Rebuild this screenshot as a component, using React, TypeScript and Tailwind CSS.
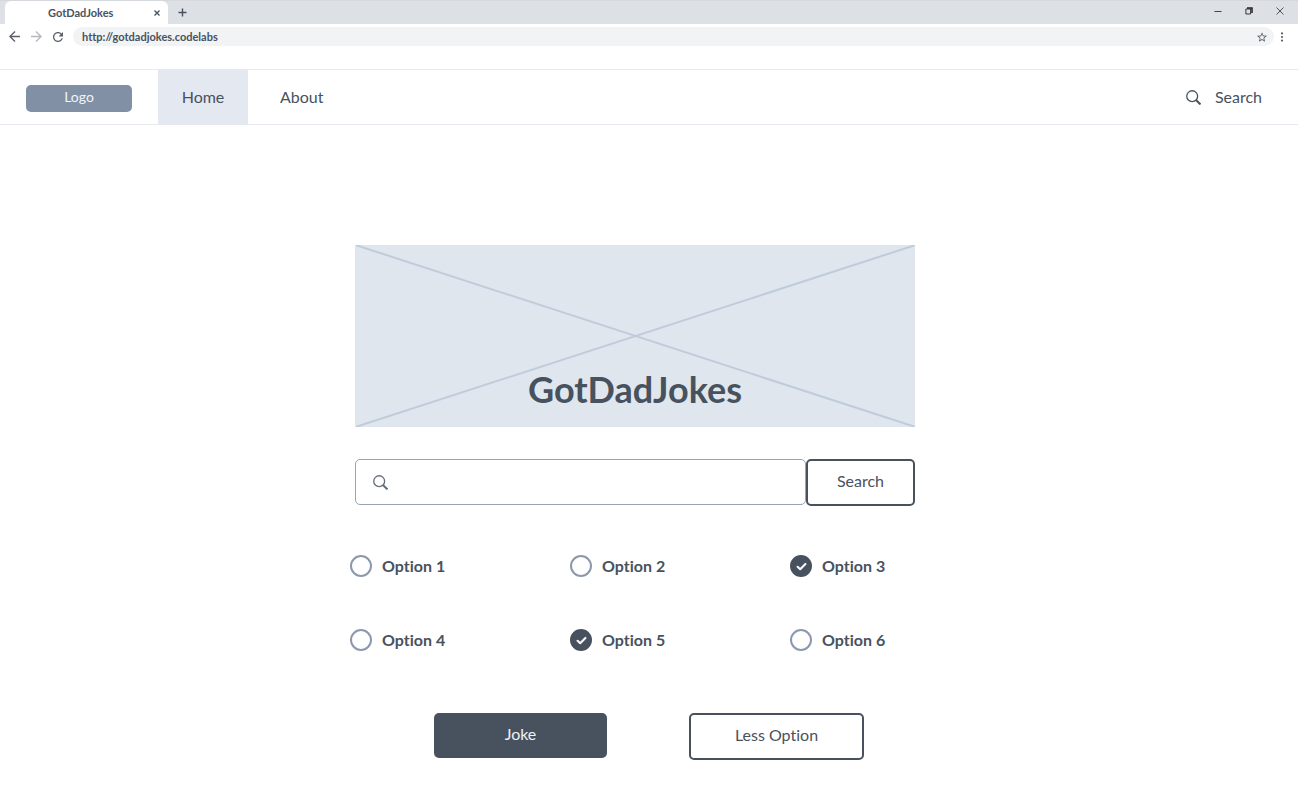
import { useState } from "react";

const initialOptions = [
  { label: "Option 1", checked: false },
  { label: "Option 2", checked: false },
  { label: "Option 3", checked: true },
  { label: "Option 4", checked: false },
  { label: "Option 5", checked: true },
  { label: "Option 6", checked: false },
];

function SearchIcon({ className }: { className: string }) {
  return (
    <svg viewBox="0 0 16 16" fill="none" stroke="currentColor" className={className} aria-hidden="true">
      <circle cx="6.6" cy="6.6" r="5.8" strokeWidth="1.4" />
      <path d="M10.6 10.6 L15.4 15.4" strokeWidth="2.1" />
    </svg>
  );
}

function TabStrip() {
  return (
    <div className="flex h-6 items-stretch border-t border-[#d5d8dc] bg-[#dde0e4] pl-[5px] text-[#48525e]">
      <div className="flex w-[163px] items-center rounded-t-md bg-white pr-2 pl-[43px]">
        <span className="flex-1 text-[11px] leading-4 font-bold">GotDadJokes</span>
        <button type="button" aria-label="Close tab" className="flex">
          <svg viewBox="0 0 6 6" className="size-[6px]" stroke="currentColor" strokeWidth="1.3">
            <path d="M0.5 0.5 L5.5 5.5 M5.5 0.5 L0.5 5.5" />
          </svg>
        </button>
      </div>
      <button type="button" aria-label="New tab" className="ml-[10px] flex items-center">
        <svg viewBox="0 0 9 9" className="size-[9px]" stroke="currentColor" strokeWidth="1.4">
          <path d="M4.5 0.5 V8.5 M0.5 4.5 H8.5" />
        </svg>
      </button>
      <div className="mb-1 ml-auto flex items-center gap-[23px] pr-[14px]">
        <button type="button" aria-label="Minimize" className="flex">
          <svg viewBox="0 0 8 8" className="size-2" stroke="#444" strokeWidth="1">
            <path d="M0.5 4.5 H7.5" />
          </svg>
        </button>
        <button type="button" aria-label="Restore" className="flex">
          <svg viewBox="0 0 8 8" className="size-2" fill="none" stroke="#222">
            <path d="M2 1 H7 V6" strokeWidth="1.5" />
            <path d="M0.9 2 H5.6 V7 H0.9 Z" strokeWidth="0.9" />
          </svg>
        </button>
        <button type="button" aria-label="Close window" className="flex">
          <svg viewBox="0 0 8 8" className="size-2" stroke="#444" strokeWidth="0.9">
            <path d="M0.5 0.5 L7.5 7.5 M7.5 0.5 L0.5 7.5" />
          </svg>
        </button>
      </div>
    </div>
  );
}

function AddressBar() {
  return (
    <div className="flex items-center pt-[3px] pr-[14px] pl-[9px] text-[#5b6066]">
      <button type="button" aria-label="Back" className="flex">
        <svg viewBox="4 4 16 16" className="size-[11px]" fill="currentColor">
          <path d="M20 11H7.83l5.59-5.59L12 4l-8 8 8 8 1.41-1.41L7.83 13H20v-2z" />
        </svg>
      </button>
      <button type="button" aria-label="Forward" className="ml-[11px] flex text-[#b5b9be]">
        <svg viewBox="4 4 16 16" className="size-[11px]" fill="currentColor">
          <path d="M12 4l-1.41 1.41L16.17 11H4v2h12.17l-5.58 5.59L12 20l8-8z" />
        </svg>
      </button>
      <button type="button" aria-label="Reload" className="ml-[11px] flex">
        <svg viewBox="4 4 16 16" className="size-[10px]" fill="currentColor">
          <path d="M17.65 6.35C16.2 4.9 14.21 4 12 4c-4.42 0-7.99 3.58-7.99 8s3.57 8 7.99 8c3.73 0 6.84-2.55 7.73-6h-2.08c-.82 2.33-3.04 4-5.65 4-3.31 0-6-2.69-6-6s2.69-6 6-6c1.66 0 3.14.69 4.22 1.78L13 11h7V4l-2.35 2.35z" />
        </svg>
      </button>
      <div className="ml-[10px] flex h-[19px] flex-1 items-center rounded-full bg-[#f1f3f5] pr-[7px] pl-[9px]">
        <input
          type="text"
          aria-label="Address"
          defaultValue="http://gotdadjokes.codelabs"
          className="min-w-0 flex-1 bg-transparent text-[11px] leading-4 font-bold text-[#48525e] outline-none"
        />
        <button type="button" aria-label="Bookmark" className="flex">
          <svg viewBox="2 2 20 19" className="size-[10px]" fill="currentColor">
            <path d="M22 9.24l-7.19-.62L12 2 9.19 8.63 2 9.24l5.46 4.73L5.82 21 12 17.27 18.18 21l-1.63-7.03L22 9.24zM12 15.4l-3.76 2.27 1-4.28-3.32-2.88 4.38-.38L12 6.1l1.71 4.04 4.38.38-3.32 2.88 1 4.28L12 15.4z" />
          </svg>
        </button>
      </div>
      <button type="button" aria-label="Menu" className="ml-[6px] flex">
        <svg viewBox="0 0 4 10" className="h-[10px] w-1" fill="currentColor">
          <circle cx="2" cy="1.4" r="1.1" />
          <circle cx="2" cy="5" r="1.1" />
          <circle cx="2" cy="8.6" r="1.1" />
        </svg>
      </button>
    </div>
  );
}

function NavBar() {
  return (
    <nav className="mt-[23px] flex h-14 items-stretch border-y border-[#e6e9ee] leading-6">
      <a
        href="#logo"
        className="mb-3 ml-[26px] h-[27px] w-[106px] self-end rounded-[5px] bg-[#8290a6] text-center text-[14px] text-[#f1f4f8]"
      >
        Logo
      </a>
      <a href="#home" className="ml-[26px] flex w-[90px] items-center justify-center bg-[#e4e8f1]">
        Home
      </a>
      <a href="#about" className="ml-8 flex items-center">
        About
      </a>
      <a href="#search" className="mr-9 ml-auto flex items-center gap-[14px]">
        <SearchIcon className="size-[15px]" />
        Search
      </a>
    </nav>
  );
}

function Hero() {
  return (
    <div className="relative flex h-[182px] items-end justify-center bg-[#dfe6ee] pb-[14px]">
      <svg
        viewBox="0 0 560 182"
        preserveAspectRatio="none"
        className="absolute inset-0 size-full"
        stroke="#c0cbdb"
        strokeWidth="2"
        strokeLinecap="round"
        aria-hidden="true"
      >
        <path d="M2 0.5 L559 181.5 M2 181.5 L559 0.5" />
      </svg>
      <h1 className="relative text-[36px] leading-[48px] font-bold">GotDadJokes</h1>
    </div>
  );
}

export default function App() {
  const [options, setOptions] = useState(initialOptions);

  const toggle = (index: number) =>
    setOptions(options.map((o, i) => (i === index ? { ...o, checked: !o.checked } : o)));

  return (
    <div className="min-h-screen bg-white font-['Lato',sans-serif] text-[16px] text-[#48525e] [font-variant-ligatures:none]">
      <TabStrip />
      <AddressBar />
      <NavBar />
      <main className="pt-[120px] pb-6 leading-6">
        <div className="mx-auto max-w-[588px] pr-7">
          <Hero />
          <form className="mt-8 flex items-start" onSubmit={(e) => e.preventDefault()}>
            <label className="flex h-[46px] flex-1 items-center gap-3 rounded-[5px] border border-[#98a4b6] pl-[17px]">
              <SearchIcon className="size-[15px] text-[#656d78]" />
              <input type="search" aria-label="Search jokes" className="min-w-0 flex-1 outline-none" />
            </label>
            <button
              type="submit"
              className="h-[47px] w-[109px] rounded-[5px] border-2 border-[#48525e] pb-1"
            >
              Search
            </button>
          </form>
        </div>
        <div className="mx-auto mt-12 grid max-w-[598px] grid-cols-[220fr_220fr_158fr] gap-y-[50px]">
          {options.map((option, index) => (
            <label key={option.label} className="flex items-center gap-[10px] font-bold">
              <span className="relative flex size-[22px]">
                <input
                  type="checkbox"
                  checked={option.checked}
                  onChange={() => toggle(index)}
                  className="size-[22px] appearance-none rounded-full border-2 border-[#8b98ad] checked:border-[#48525e] checked:bg-[#48525e]"
                />
                {option.checked && (
                  <svg
                    viewBox="0 0 22 22"
                    className="pointer-events-none absolute inset-0 size-[22px]"
                    fill="none"
                    stroke="#f4f6f9"
                    strokeWidth="2.2"
                    strokeLinecap="round"
                    strokeLinejoin="round"
                  >
                    <path d="M7.6 11.8 L10.2 14.2 L15.4 9" />
                  </svg>
                )}
              </span>
              {option.label}
            </label>
          ))}
        </div>
        <div className="mt-[61px] flex items-start justify-center gap-[82px]">
          <button type="button" className="h-[45px] w-[173px] rounded-[5px] bg-[#48525e] pb-1 text-[#eef1f5]">
            Joke
          </button>
          <button type="button" className="h-[47px] w-[175px] rounded-[5px] border-2 border-[#48525e] pb-1">
            Less Option
          </button>
        </div>
      </main>
    </div>
  );
}
